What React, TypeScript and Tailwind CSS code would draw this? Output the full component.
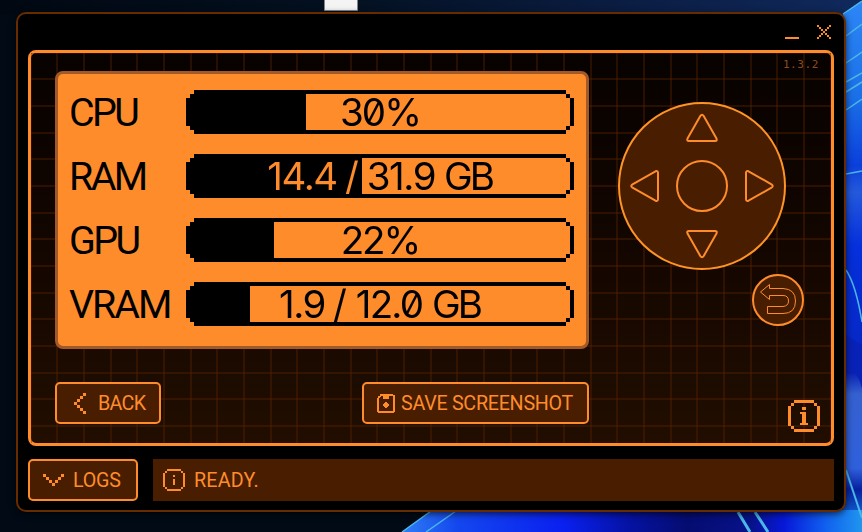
import type { CSSProperties } from 'react';

const ORANGE = '#ff8c2b';

type Part = { text: string; box: string };
type Meter = { label: string; labelTracking: string; parts: Part[]; fill: number };

const METERS: Meter[] = [
  {
    label: 'CPU',
    labelTracking: 'tracking-[-2.6px]',
    parts: [{ text: '30%', box: 'w-[78px] tracking-[-2px]' }],
    fill: 120,
  },
  {
    label: 'RAM',
    labelTracking: 'tracking-[-2.6px]',
    parts: [
      { text: '14.4', box: 'w-[68px] tracking-[-1.4px]' },
      { text: '/', box: 'w-[32px]' },
      { text: '31.9', box: 'w-[66px] tracking-[-1.4px]' },
      { text: 'GB', box: 'w-[58px] pl-[10px] tracking-[-3px]' },
    ],
    fill: 176,
  },
  {
    label: 'GPU',
    labelTracking: 'tracking-[-2.6px]',
    parts: [{ text: '22%', box: 'w-[78px] tracking-[-2px]' }],
    fill: 88,
  },
  {
    label: 'VRAM',
    labelTracking: 'tracking-[-2px]',
    parts: [
      { text: '1.9', box: 'w-[44px] tracking-[-1.4px]' },
      { text: '/', box: 'w-[32px]' },
      { text: '12.0', box: 'w-[66px] tracking-[-1.8px]' },
      { text: 'GB', box: 'w-[58px] pl-[10px] tracking-[-3px]' },
    ],
    fill: 64,
  },
];

/** Draws a bitmap: every "#" in the rows is one square of the given size. */
function Pixels({ rows, size }: { rows: string[]; size: number }) {
  const w = rows[0].length;
  const h = rows.length;
  return (
    <svg className="block shrink-0" width={w * size} height={h * size} viewBox={`0 0 ${w} ${h}`} shapeRendering="crispEdges" fill={ORANGE}>
      {rows.flatMap((row, y) =>
        [...row].map((c, x) => (c === '#' ? <rect key={`${x}-${y}`} x={x} y={y} width="1" height="1" /> : null)),
      )}
    </svg>
  );
}

function Wallpaper() {
  return (
    <svg className="absolute inset-0" width="862" height="532" viewBox="0 0 862 532">
      <defs>
        <linearGradient id="top" x1="0" x2="1">
          <stop offset="0" stopColor="#010812" />
          <stop offset="0.38" stopColor="#03101f" />
          <stop offset="0.7" stopColor="#0a1c40" />
          <stop offset="1" stopColor="#10295c" />
        </linearGradient>
        <linearGradient id="side" x1="0" x2="0" y1="0" y2="1">
          <stop offset="0" stopColor="#2d86f6" />
          <stop offset="0.18" stopColor="#1b70e8" />
          <stop offset="0.31" stopColor="#0b3fdc" />
          <stop offset="0.36" stopColor="#2459dc" />
          <stop offset="0.46" stopColor="#0530dc" />
          <stop offset="0.64" stopColor="#0628c8" />
          <stop offset="0.7" stopColor="#0a22b4" />
          <stop offset="0.74" stopColor="#3560d0" />
          <stop offset="0.88" stopColor="#2f60dc" />
          <stop offset="0.92" stopColor="#06209e" />
          <stop offset="1" stopColor="#1a8df0" />
        </linearGradient>
        <linearGradient id="bottom" x1="0" x2="1">
          <stop offset="0" stopColor="#2f7df5" />
          <stop offset="0.12" stopColor="#1447ee" />
          <stop offset="0.35" stopColor="#0a20f0" />
          <stop offset="0.5" stopColor="#0512a0" />
          <stop offset="0.62" stopColor="#050c70" />
          <stop offset="0.76" stopColor="#08128a" />
          <stop offset="0.83" stopColor="#0618d8" />
          <stop offset="0.92" stopColor="#1060f0" />
          <stop offset="1" stopColor="#2095ee" />
        </linearGradient>
      </defs>
      <rect width="862" height="532" fill="url(#top)" />
      <rect y="14" width="430" height="518" fill="#010a15" />
      <path d="M862 1 L843 14 V532 H862Z" fill="url(#side)" />
      <path d="M402 532 L432 510 H862 V532Z" fill="url(#bottom)" />
      <g fill="none" stroke="#4bb8e8" strokeWidth="1.5">
        <path d="M843 14 L862 1 M846 36 L862 24 M846 63 L862 52 M846 82 L862 73 M846 92 L862 82 M846 110 L862 99 M846 174 L862 171" />
        <path d="M846 270 Q856 285 862 322" />
        <path d="M402 532 L431 511 M426 532 L456 511" />
        <path d="M738 512 L750 532 M755 512 L768 532" strokeWidth="3" />
        <path d="M846 470 L862 518" strokeWidth="2" />
      </g>
      <path d="M846 365 Q858 372 862 388 V345 L846 335Z" fill="#0822b8" />
      <path d="M324.5 -1 V10.5 H357.5 V-1Z" fill="#f4f4f4" stroke="#858585" />
    </svg>
  );
}

function MeterRow({ label, labelTracking, parts, fill }: Meter) {
  const split: CSSProperties = {
    backgroundImage: `linear-gradient(90deg, ${ORANGE} ${fill}px, #000 ${fill}px)`,
  };
  return (
    <div className="flex h-11 items-center">
      <span className={`w-[118px] pl-px text-[39.4px] leading-[44px] whitespace-nowrap ${labelTracking}`}>
        <span className="block pt-[2px]">{label}</span>
      </span>
      <div className="grid h-11 w-[388px]">
        <svg className="col-start-1 row-start-1" width="388" height="44" viewBox="0 0 97 11" shapeRendering="crispEdges">
          <path d="M2 0H95V1H2zM1 1H2V2H1zM0 2H1V9H0zM1 9H2V10H1zM2 10H95V11H2zM95 1H96V2H95zM96 2H97V9H96zM95 9H96V10H95z" />
          <path d={`M1 1H${fill / 4}V10H1z`} />
        </svg>
        <div
          className="col-start-1 row-start-1 flex justify-center bg-clip-text font-[Inter,sans-serif] text-[38.5px] leading-[44px] whitespace-nowrap text-transparent slashed-zero"
          style={split}
        >
          {parts.map((p) => (
            <span key={p.text} className={`flex shrink-0 justify-center ${p.box}`}>
              {p.text}
            </span>
          ))}
        </div>
      </div>
    </div>
  );
}

function DirectionPad() {
  return (
    <svg className="ml-[29px] block" width="168" height="168" viewBox="618 102 168 168" fill="#481d00" stroke={ORANGE} strokeWidth="2" strokeLinejoin="round">
      <circle cx="702" cy="186" r="83" stroke="#ff9424" />
      <circle cx="702" cy="186" r="25" />
      <path d="M700.3 116 Q702 113.5 703.7 116 L716.5 138.5 Q717.5 141 715 141 H689 Q686.5 141 687.5 138.5Z" />
      <path d="M700.3 256 Q702 258.5 703.7 256 L716.5 233.5 Q717.5 231 715 231 H689 Q686.5 231 687.5 233.5Z" />
      <path d="M632.5 184.3 Q630 186 632.5 187.7 L655.5 200.7 Q658 201.7 658 199 V173 Q658 170.3 655.5 171.3Z" />
      <path d="M771.5 184.3 Q774 186 771.5 187.7 L748.5 200.7 Q746 201.7 746 199 V173 Q746 170.3 748.5 171.3Z" />
    </svg>
  );
}

const CHEVRON_LEFT = ['...#', '..#.', '.#..', '#...', '.#..', '..#.', '...#'];
const CHEVRON_DOWN = ['#.....#', '.#...#.', '..#.#..', '...#...'];
const CLOSE = ['#.....#', '.#...#.', '..#.#..', '...#...', '..#.#..', '.#...#.', '#.....#'];
const READY = [
  '..#######..',
  '.#.......#.',
  '#.........#',
  '#....#....#',
  '#.........#',
  '#....#....#',
  '#....#....#',
  '#....#....#',
  '#.........#',
  '.#.......#.',
  '..#######..',
];

export default function App() {
  return (
    <div className="relative h-[532px] w-[862px] overflow-hidden bg-[#010a15] font-[Roboto,sans-serif]">
      <Wallpaper />
      <div className="relative h-full pt-3 pl-4">
        <div className="flex h-[500px] w-[830px] flex-col rounded-[10px] border-2 border-[#662c00] bg-black px-[10px] text-[#ff8c2b] shadow-[0_2px_7px_rgba(0,0,0,0.65)]">
          <header className="flex h-9 shrink-0 items-start justify-end gap-[18px] pt-[11px] pr-[3px]">
            <button className="flex h-[14px] items-end" aria-label="Minimize">
              <span className="block h-[2px] w-[14px] bg-[#ff8c2b]" />
            </button>
            <button aria-label="Close">
              <Pixels rows={CLOSE} size={2} />
            </button>
          </header>

          <main className="h-[396px] shrink-0 rounded-lg border-[3px] border-[#ff8c2b] bg-gradient-to-b from-[#070200] to-[#210e00]">
            <div className="flex h-full bg-[linear-gradient(90deg,transparent_24px,#58220066_24px,#58220066_26px,transparent_26px,transparent_51px,#58220066_51px,#58220066_53px,transparent_53px,transparent_78px,#58220066_78px),linear-gradient(180deg,transparent_24px,#58220066_24px,#58220066_26px,transparent_26px,transparent_51px,#58220066_51px,#58220066_53px,transparent_53px,transparent_78px,#58220066_78px)] bg-[length:80px_80px] bg-[position:1px_1px] pt-[18px] pl-6">
              <div className="flex w-[534px] flex-col">
                <section className="flex h-[278px] flex-col gap-5 rounded-lg border-[3px] border-[#a1592a] bg-[#ff8c2b] pt-4 pl-[10px] text-black">
                  {METERS.map((m) => (
                    <MeterRow key={m.label} {...m} />
                  ))}
                </section>
                <div className="mt-[33px] flex justify-between">
                  <button className="flex h-[42px] w-[106px] items-center gap-3 rounded-[5px] border-2 border-[#ff8c2b] bg-[#481d00] pl-[17px] text-[19.7px] tracking-[-0.7px]">
                    <Pixels rows={CHEVRON_LEFT} size={3} />
                    <span className="pt-[2px]">BACK</span>
                  </button>
                  <button className="flex h-[42px] w-[227px] items-center gap-[6px] rounded-[5px] border-2 border-[#ff8c2b] bg-[#481d00] pl-[13px] text-[19.7px] tracking-[-0.27px] whitespace-nowrap">
                    <svg className="shrink-0" width="18" height="19" viewBox="0 0 18 19" shapeRendering="crispEdges" fill={ORANGE}>
                      <path d="M3 0H16V2H3zM1 2H4V3H1zM0 4H2V18H0zM1 2H3V4H1zM16 1H18V18H16zM1 17H17V19H1zM6 0H12V5H6zM8 8H10V14H8zM6 10H12V12H6zM7 9H11V13H7z" />
                    </svg>
                    <span className="pt-[2px]">SAVE SCREENSHOT</span>
                  </button>
                </div>
              </div>

              <aside className="-mt-[18px] flex w-[242px] flex-col">
                <div className="h-[49px] pt-[5px] pr-3 text-right font-['DejaVu_Sans_Mono',monospace] text-[11px] leading-[14px] tracking-[0.6px] text-[#8a4c1f]">
                  1.3.2
                </div>
                <DirectionPad />
                <button className="mt-1 ml-[163px] size-[52px] rounded-full border-2 border-[#ff8c2b] bg-[#481d00]" aria-label="Return">
                  <svg className="block" width="48" height="48" viewBox="754 276 48 48" fill="none" stroke={ORANGE} strokeWidth="1">
                    <path d="M760.5 292 L769.5 284.5 V288.5 H783 Q795.5 289 795.5 301 Q795.5 313.5 783 313.5 H767.5 V306.5 H783 Q788.5 306 788.5 301 Q788.5 295.5 783 295.5 H769.5 V299.5Z" />
                  </svg>
                </button>
                <button className="mt-[74px] ml-[199px] size-8" aria-label="Information">
                  <svg className="block" width="32" height="32" viewBox="0 0 32 32" shapeRendering="crispEdges" fill={ORANGE}>
                    <path d="M6 0H26V3H6zM3 3H6V6H3zM26 3H29V6H26zM0 6H3V26H0zM29 6H32V26H29zM3 26H6V29H3zM26 26H29V29H26zM6 29H26V32H6z" />
                    <path d="M14 7H18V10H14zM12 12H18V14H12zM14 14H18V23H14zM12 23H20V25H12z" />
                  </svg>
                </button>
              </aside>
            </div>
          </main>

          <footer className="mt-[13px] flex h-[42px] shrink-0 gap-[15px] text-[19.7px]">
            <button className="flex w-[110px] shrink-0 items-center gap-[9px] rounded-[5px] border-2 border-[#ff8c2b] bg-[#481d00] pl-[13px] tracking-[-0.2px]">
              <Pixels rows={CHEVRON_DOWN} size={3} />
              <span className="pt-[2px]">LOGS</span>
            </button>
            <div className="flex flex-1 items-center gap-[9px] bg-[#481d00] pl-[10px] tracking-[0.2px]">
              <Pixels rows={READY} size={2} />
              <span className="pt-[2px]">READY.</span>
            </div>
          </footer>
        </div>
      </div>
    </div>
  );
}
